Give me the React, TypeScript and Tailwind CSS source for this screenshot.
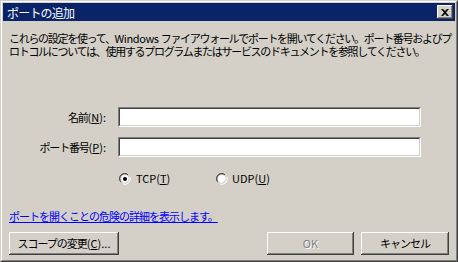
import React from "react"

const font = "font-['MS_UI_Gothic','Noto_Sans_CJK_JP',sans-serif]"

function Sunken({ className }: { className: string }) {
  return (
    <div className={`border border-t-[#808080] border-l-[#808080] border-b-white border-r-white ${className}`}>
      <div className="h-full w-full border border-t-[#404040] border-l-[#404040] border-b-[#d4d0c8] border-r-[#d4d0c8] bg-white" />
    </div>
  )
}

function Button({ children, className = "", disabled = false }: { children: React.ReactNode; className?: string; disabled?: boolean }) {
  return (
    <div
      className={`flex h-[23px] items-center justify-center bg-[#d4d0c8] shadow-[inset_-1px_-1px_#404040,inset_1px_1px_#ffffff,inset_-2px_-2px_#808080] ${
        disabled ? "text-[#808080] [text-shadow:1px_1px_#ffffff]" : "text-black"
      } ${className}`}
    >
      {children}
    </div>
  )
}

function Radio({ checked }: { checked?: boolean }) {
  return (
    <svg width="12" height="12" viewBox="0 0 12 12" className="shrink-0">
      <path d="M1 8 A5.5 5.5 0 0 1 8 1" stroke="#808080" fill="none" />
      <path d="M2 9 A4.5 4.5 0 0 1 9 2" stroke="#404040" fill="none" />
      <circle cx="6" cy="6" r="4" fill="#fff" />
      <path d="M10 3 A5.5 5.5 0 0 1 3 10" stroke="#d4d0c8" fill="none" />
      <path d="M11 4 A5.5 5.5 0 0 1 4 11" stroke="#fff" fill="none" />
      {checked && <circle cx="6" cy="6" r="2" fill="#000" />}
    </svg>
  )
}

export default function App() {
  return (
    <div className={`h-[262px] w-[458px] border border-t-[#d4d0c8] border-l-[#d4d0c8] border-b-[#404040] border-r-[#404040] bg-[#d4d0c8] ${font} text-[11px] leading-[13px] text-black`}>
      <div className="flex h-full flex-col border border-t-white border-l-white border-b-[#808080] border-r-[#808080] p-px">
        {/* Title bar */}
        <div className="flex h-[18px] items-center justify-between bg-[#0a246a] pl-[4px] pr-[2px]">
          <span className="text-[12px] tracking-[-0.8px] text-white">ポートの追加</span>
          <div className="flex h-[14px] w-[16px] items-center justify-center bg-[#d4d0c8] shadow-[inset_-1px_-1px_#404040,inset_1px_1px_#ffffff,inset_-2px_-2px_#808080]">
            <svg width="8" height="7" viewBox="0 0 8 7">
              <path d="M0 0h2l2 2 2-2h2L5 3.5 8 7H6L4 5 2 7H0l3-3.5z" fill="#000" />
            </svg>
          </div>
        </div>

        {/* Body */}
        <div className="flex flex-1 flex-col px-[6px] pt-[11px]">
          <p className="whitespace-nowrap tracking-[-1.3px]">
            これらの設定を使って、<span className="tracking-[-0.4px]">Windows </span>ファイアウォールでポートを開いてください。ポート番号およびプ
            <br />
            ロトコルについては、使用するプログラムまたはサービスのドキュメントを参照してください。
          </p>

          <div className="mt-[49px] grid grid-cols-[97px_303px] items-center gap-x-[12px] gap-y-[10px]">
            <span className="text-right tracking-[-1.2px]">
              名前<span className="tracking-normal">(<span className="underline">N</span>):</span>
            </span>
            <Sunken className="h-[20px]" />
            <span className="text-right tracking-[-1.2px]">
              ポート番号<span className="tracking-normal">(<span className="underline">P</span>):</span>
            </span>
            <Sunken className="h-[20px]" />
          </div>

          <div className="mt-[15px] flex items-center pl-[110px]">
            <div className="flex w-[97px] items-center gap-[5px]">
              <Radio checked />
              <span>
                TCP(<span className="underline">T</span>)
              </span>
            </div>
            <div className="flex items-center gap-[4px]">
              <Radio />
              <span>
                UDP(<span className="underline">U</span>)
              </span>
            </div>
          </div>

          <a className="mt-[25px] self-start whitespace-nowrap text-[#0000ff] underline tracking-[-1px]">
            ポートを開くことの危険の詳細を表示します。
          </a>

          <div className="mt-[9px] flex items-center">
            <Button className="w-[110px] tracking-[-1px]">
              スコープの変更<span className="tracking-normal">(<span className="underline">C</span>)...</span>
            </Button>
            <Button disabled className="ml-auto w-[87px]">
              OK
            </Button>
            <Button className="ml-[7px] w-[88px] tracking-[-1px]">キャンセル</Button>
          </div>
        </div>
      </div>
    </div>
  )
}
